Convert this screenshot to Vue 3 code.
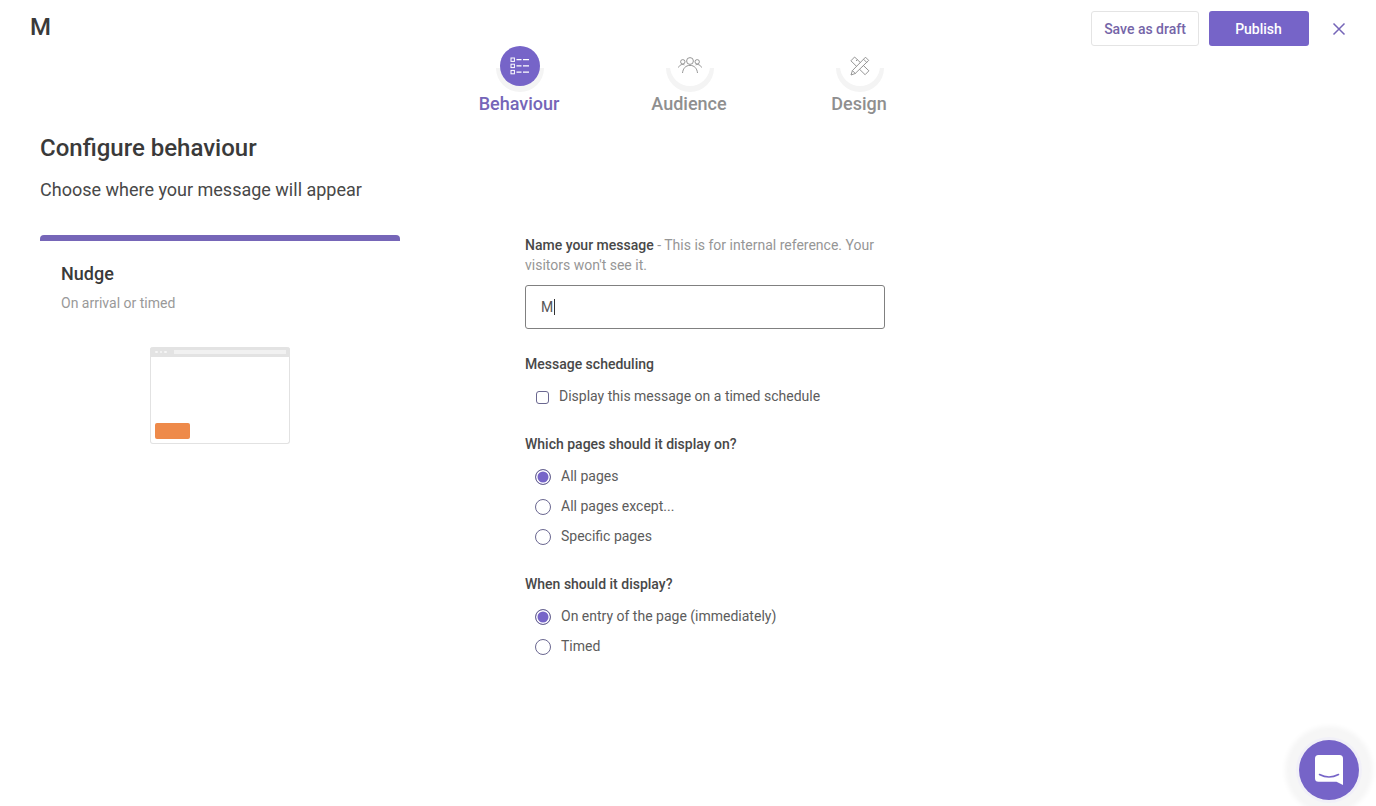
<script setup>
const steps = [
  { name: 'Behaviour', active: true, icon: 'list' },
  { name: 'Audience', active: false, icon: 'people' },
  { name: 'Design', active: false, icon: 'tools' }
]
const pages = [
  { label: 'All pages', checked: true },
  { label: 'All pages except...', checked: false },
  { label: 'Specific pages', checked: false }
]
const timing = [
  { label: 'On entry of the page (immediately)', checked: true },
  { label: 'Timed', checked: false }
]
</script>

<template>
  <div class="page">
    <header class="top">
      <div class="logo">M</div>
      <div class="actions">
        <button class="btn ghost">Save as draft</button>
        <button class="btn solid">Publish</button>
        <button class="close" aria-label="Close">
          <svg width="14" height="14" viewBox="0 0 14 14"><path d="M1.500 1.500l11 11M12.500 1.500l-11 11" stroke="#7565b8" stroke-width="1.500" fill="none"/></svg>
        </button>
      </div>
    </header>

    <nav class="steps">
      <div v-for="s in steps" :key="s.name" class="step" :class="{ active: s.active }">
        <div class="circle">
          <svg v-if="s.icon === 'list'" width="20" height="20" viewBox="0 0 20 20" fill="none" stroke="#fff" stroke-width="1">
            <rect x="1" y="2" width="3.400" height="3.400"/><rect x="1" y="8.200" width="3.400" height="3.400"/><rect x="1" y="14.400" width="3.400" height="3.400"/>
            <path d="M6.500 3.700h5M13 3.700h6M6.500 9.900h5M13 9.900h6M6.500 16.100h5M13 16.100h6" stroke-width="1.200"/>
          </svg>
          <svg v-else-if="s.icon === 'people'" width="24" height="20" viewBox="0 0 24 20" fill="none" stroke="#8a8a8a" stroke-width="0.9">
            <circle cx="12" cy="5" r="3.400"/><path d="M4.500 17c.5-4.500 3-7.600 7.500-7.600s7 3.100 7.500 7.600"/>
            <circle cx="4.800" cy="5.800" r="2.200"/><path d="M.5 11.500c.8-2 2.200-3 4-3 .7 0 1.300.1 1.900.4"/>
            <circle cx="19.200" cy="5.800" r="2.200"/><path d="M23.500 11.500c-.8-2-2.200-3-4-3-.7 0-1.300.1-1.900.4"/>
          </svg>
          <svg v-else width="20" height="20" viewBox="0 0 20 20" fill="none" stroke="#8a8a8a" stroke-width="0.9" stroke-linejoin="round">
            <path d="M4.600 1l14.300 13.800-3.800 3.900L.9 4.800z"/>
            <path d="M6 5l1.500-1.500M9 8l1.500-1.500M12 11l1.500-1.500"/>
            <path d="M15.500 1.200l3.200 3.200L5.200 17.500 1 19l1.400-4.400z" fill="#fff"/>
            <path d="M13.500 3.200l3.200 3.200M2.400 14.600l3 3"/>
          </svg>
        </div>
        <div class="step-name">{{ s.name }}</div>
      </div>
    </nav>

    <main class="main">
      <h1 class="title">Configure behaviour</h1>
      <p class="subtitle">Choose where your message will appear</p>

      <div class="columns">
        <section class="card">
          <h2 class="card-title">Nudge</h2>
          <p class="card-sub">On arrival or timed</p>
          <div class="mock">
            <div class="mock-bar">
              <i class="dot"></i><i class="dot"></i><i class="dot"></i>
              <span class="mock-url"></span>
            </div>
            <div class="mock-body"><span class="mock-btn"></span></div>
          </div>
        </section>

        <form class="form" @submit.prevent>
          <p class="field-label name-label"><b>Name your message</b> <span class="hint">- This is for internal reference. Your</span><br /><span class="hint">visitors won't see it.</span></p>
          <div class="input">M<span class="caret"></span></div>

          <p class="field-label sched">Message scheduling</p>
          <label class="check-row"><input type="checkbox" class="check" /><span>Display this message on a timed schedule</span></label>

          <p class="field-label group">Which pages should it display on?</p>
          <div class="radios">
            <label v-for="p in pages" :key="p.label" class="radio-row">
              <input type="radio" name="pages" class="radio" :checked="p.checked" /><span>{{ p.label }}</span>
            </label>
          </div>

          <p class="field-label group">When should it display?</p>
          <div class="radios">
            <label v-for="t in timing" :key="t.label" class="radio-row">
              <input type="radio" name="timing" class="radio" :checked="t.checked" /><span>{{ t.label }}</span>
            </label>
          </div>
        </form>
      </div>
    </main>

    <button class="chat" aria-label="Chat">
      <svg width="28" height="30" viewBox="0 0 28 30"><path d="M3.500 0h21A3.500 3.500 0 0 1 28 3.500V30l-6.500-3.300H3.500A3.500 3.500 0 0 1 0 23.200V3.500A3.500 3.500 0 0 1 3.500 0z" fill="#fff"/><path d="M4.500 19.500c6 3.200 13 3.200 19 0" stroke="#7664c8" stroke-width="1.600" fill="none" stroke-linecap="round"/></svg>
    </button>
  </div>
</template>

<style>
html, body { margin: 0; background: #fff; overflow: hidden; }
</style>

<style scoped>
.page {
  height: 806px;
  overflow: hidden;
  font-family: Roboto, "Liberation Sans", sans-serif;
  color: #555;
  background: #fff;
}
.top {
  display: flex;
  justify-content: space-between;
  align-items: flex-start;
  height: 35px;
  padding: 11px 29px 0 30px;
}
.logo { font-size: 24px; font-weight: 500; line-height: 32px; color: #3a3a3a; }
.actions { display: flex; align-items: center; gap: 10px; }
.btn {
  height: 35px;
  font: 500 14px Roboto, sans-serif;
  border-radius: 3px;
  padding: 0;
}
.ghost { width: 108px; background: #fff; border: 1px solid #e4e4e4; color: #7565a8; }
.solid { width: 100px; padding-right: 1px; background: #7664c8; border: 0; color: #fff; }
.close {
  width: 16px; height: 16px; margin-left: 12px; padding: 0;
  border: 0; background: none; display: flex; align-items: center; justify-content: center;
}

.steps { display: flex; justify-content: center; padding-left: 4px; height: 69px; }
.step { width: 170px; display: flex; flex-direction: column; align-items: center; }
.circle {
  position: relative;
  width: 40px; height: 40px; border-radius: 50%;
  display: flex; align-items: center; justify-content: center;
  background: #fff;
  margin-bottom: 7px;
}
.circle::before {
  content: "";
  position: absolute;
  left: -4px; top: -2px;
  width: 48px; height: 48px;
  border-radius: 50%;
  background: #f4f4f4;
  clip-path: inset(50% 0 0 0);
  filter: blur(0.5px);
}
.circle::after {
  content: "";
  position: absolute;
  inset: 0;
  border-radius: 50%;
  background: #fff;
}
.active .circle::after { background: #7664c8; }
.circle svg { position: relative; z-index: 1; }
.step-name { margin-right: 2px; font-size: 18px; font-weight: 500; color: #8f8f8f; line-height: 22px; }
.active .step-name { color: #7565b8; }

.main { padding: 17px 0 0 40px; }
.title { margin: 0; font-size: 24px; font-weight: 500; line-height: 32px; color: #3a3a3a; }
.subtitle { margin: 14px 0 0; font-size: 18px; line-height: 24px; color: #484848; }

.columns { display: flex; gap: 125px; margin-top: 33px; }
.card {
  width: 360px; flex: none;
  border-top: 6px solid #7666b8;
  border-radius: 4px 4px 0 0;
  box-sizing: border-box;
  padding-top: 21px;
  display: flex; flex-direction: column;
}
.card-title { margin: 0 0 0 21px; font-size: 18px; font-weight: 500; line-height: 24px; color: #3a3a3a; }
.card-sub { margin: 7px 0 0 21px; font-size: 14px; line-height: 20px; color: #999; }
.mock {
  align-self: center;
  width: 140px; height: 97px;
  margin-top: 34px;
  box-sizing: border-box;
  border: 1px solid #e2e2e2;
  border-top: 0;
  border-radius: 3px;
  display: flex; flex-direction: column;
}
.mock-bar {
  height: 10px; margin: 0 -1px;
  background: #e3e3e3;
  border-radius: 3px 3px 0 0;
  display: flex; align-items: center; gap: 2px;
  padding: 0 5px;
  flex: none;
}
.dot { width: 2.500px; height: 2.500px; border-radius: 50%; background: #f6f6f6; }
.mock-url { flex: 1; height: 4px; margin-left: 5px; margin-right: -1px; background: #f1f1f1; }
.mock-body { flex: 1; display: flex; align-items: flex-end; padding: 0 0 4px 4px; }
.mock-btn { width: 35px; height: 16px; border-radius: 2px; background: #ee8a4a; }

.form { width: 360px; flex: none; font-size: 14px; }
.field-label { margin: 0; font-size: 14px; line-height: 20px; font-weight: 500; color: #484848; }
.name-label { font-weight: 400; }
.name-label b { font-weight: 500; color: #484848; }
.hint { color: #969696; }
.input {
  display: flex; align-items: center;
  height: 44px; margin-top: 10px;
  box-sizing: border-box;
  padding-left: 15px;
  border: 1px solid #808080;
  border-radius: 3px;
  color: #555;
}
.caret { width: 1px; height: 16px; background: #333; margin-left: 1px; }
.sched { margin-top: 25px; }
.check-row { display: flex; align-items: center; gap: 10px; margin-top: 12px; padding-left: 11px; height: 20px; color: #5c5c5c; }
.check {
  appearance: none; margin: 2px 0 0;
  width: 13px; height: 13px;
  border: 1px solid #6a6790;
  border-radius: 3px;
  background: #fff;
}
.group { margin-top: 28px; }
.radios { display: flex; flex-direction: column; gap: 10px; margin-top: 12px; }
.radio-row { display: flex; align-items: center; gap: 10px; padding-left: 10px; height: 20px; color: #5c5c5c; }
.radio {
  appearance: none; margin: 2px 0 0; box-sizing: border-box;
  width: 16px; height: 16px;
  border: 1px solid #6a6790;
  border-radius: 50%;
  background: #fff;
}
.radio:checked { background: #7664c8; box-shadow: inset 0 0 0 1.500px #fff; }

.chat {
  position: fixed;
  left: 1299px; top: 740px;
  width: 60px; height: 60px;
  border: 0; padding: 0;
  border-radius: 50%;
  background: #7664c8;
  box-shadow: 0 0 0 3px #f1f0f8, 0 0 5px 14px #f6f6f6;
  display: flex; align-items: center; justify-content: center;
}
</style>
